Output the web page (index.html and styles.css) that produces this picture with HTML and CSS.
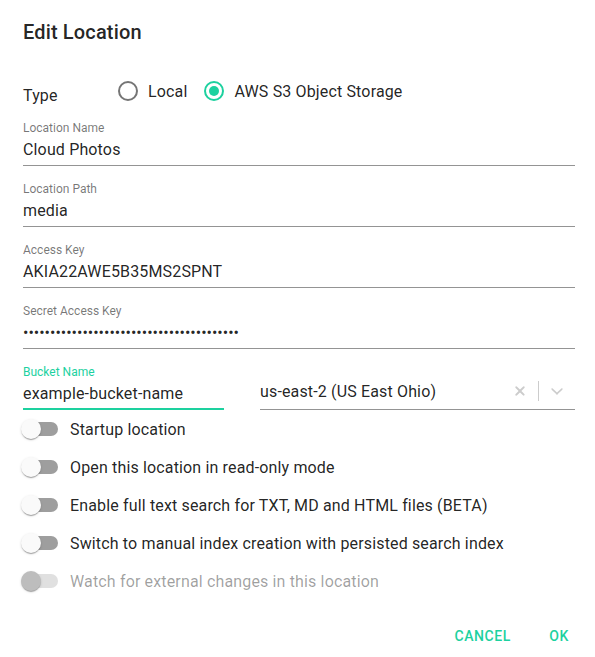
FILE: index.html
```html
<!DOCTYPE html>
<html lang="en">
<head>
<meta charset="utf-8">
<title>Edit Location</title>
<link rel="stylesheet" href="styles.css">
</head>
<body>
<div class="dialog">
  <h2 class="title">Edit Location</h2>
  <div class="content">
    <div class="type-row">
      <span class="type-label">Type</span>
      <label class="radio">
        <span class="radio-icon"><svg width="24" height="24" viewBox="0 0 24 24"><circle cx="12" cy="12" r="9" fill="none" stroke="#757575" stroke-width="2"/></svg></span>
        <span class="radio-text">Local</span>
      </label>
      <label class="radio">
        <span class="radio-icon"><svg width="24" height="24" viewBox="0 0 24 24"><circle cx="12" cy="12" r="9" fill="none" stroke="#1dd19f" stroke-width="2"/><circle cx="12" cy="12" r="5" fill="#1dd19f"/></svg></span>
        <span class="radio-text">AWS S3 Object Storage</span>
      </label>
    </div>

    <div class="field">
      <div class="field-label">Location Name</div>
      <div class="field-input">Cloud Photos</div>
    </div>
    <div class="field">
      <div class="field-label">Location Path</div>
      <div class="field-input">media</div>
    </div>
    <div class="field">
      <div class="field-label">Access Key</div>
      <div class="field-input">AKIA22AWE5B35MS2SPNT</div>
    </div>
    <div class="field">
      <div class="field-label">Secret Access Key</div>
      <div class="field-input"><span class="dots">••••••••••••••••••••••••••••••••••••••••</span></div>
    </div>

    <div class="bucket-row">
      <div class="field bucket focused">
        <div class="field-label">Bucket Name</div>
        <div class="field-input">example-bucket-name</div>
      </div>
      <div class="select">
        <span class="select-value">us-east-2 (US East Ohio)</span>
        <span class="select-icons">
          <svg class="clear" width="20" height="20" viewBox="0 0 20 20"><path d="M14.35 14.35a1 1 0 0 1-1.41 0L10 11.41l-2.94 2.94a1 1 0 1 1-1.41-1.41L8.59 10 5.65 7.06a1 1 0 1 1 1.41-1.41L10 8.59l2.94-2.94a1 1 0 1 1 1.41 1.41L11.41 10l2.94 2.94a1 1 0 0 1 0 1.41z" fill="#cccccc"/></svg>
          <span class="sep"></span>
          <svg class="chev" width="20" height="20" viewBox="0 0 20 20"><path d="M4.52 7.4c.32-.33.77-.36 1.16 0L10 11.54l4.32-4.14c.39-.36.84-.33 1.16 0 .32.33.3.88 0 1.19-.3.31-4.86 4.79-4.86 4.79a.83.83 0 0 1-1.24 0S4.82 8.9 4.52 8.59c-.3-.31-.32-.86 0-1.19z" fill="#cccccc"/></svg>
        </span>
      </div>
    </div>

    <div class="switches">
      <label class="switch-row">
        <span class="switch"><span class="track"></span><span class="thumb"></span></span>
        <span class="switch-text">Startup location</span>
      </label>
      <label class="switch-row">
        <span class="switch"><span class="track"></span><span class="thumb"></span></span>
        <span class="switch-text">Open this location in read-only mode</span>
      </label>
      <label class="switch-row">
        <span class="switch"><span class="track"></span><span class="thumb"></span></span>
        <span class="switch-text">Enable full text search for TXT, MD and HTML files (BETA)</span>
      </label>
      <label class="switch-row">
        <span class="switch"><span class="track"></span><span class="thumb"></span></span>
        <span class="switch-text">Switch to manual index creation with persisted search index</span>
      </label>
      <label class="switch-row disabled">
        <span class="switch"><span class="track"></span><span class="thumb"></span></span>
        <span class="switch-text">Watch for external changes in this location</span>
      </label>
    </div>
  </div>
  <div class="actions">
    <button class="btn">Cancel</button>
    <button class="btn">Ok</button>
  </div>
</div>
</body>
</html>
```

FILE: styles.css
```css
* { box-sizing: border-box; }
html, body { margin: 0; padding: 0; background: #fff; }
body {
  font-family: Roboto, "Liberation Sans", Arial, sans-serif;
  color: rgba(0,0,0,0.87);
}
.dialog {
  width: 595px;
  height: 657px;
  display: flex;
  flex-direction: column;
}
.title {
  margin: 0;
  padding: 16px 23px;
  font-size: 20px;
  font-weight: 500;
  line-height: 32px;
  letter-spacing: 0.0075em;
}
.content {
  padding: 0 20px 0 23px;
  flex: 1;
}
.type-row {
  display: flex;
  align-items: center;
  height: 30px;
  margin-top: 12px;
  margin-bottom: -1px;
}
.type-label {
  width: 93px;
  font-size: 16px;
  letter-spacing: 0.15px;
  padding-top: 8px;
}
.radio {
  display: flex;
  align-items: center;
  margin-right: 15px;
}
.radio-icon {
  width: 24px;
  height: 24px;
  display: flex;
  margin-right: 8px;
}
.radio-text { font-size: 16px; letter-spacing: 0.15px; }

.field {
  display: flex;
  flex-direction: column;
  margin-top: 16px;
}
.field-label {
  font-size: 12px;
  line-height: 14px;
  color: rgba(0,0,0,0.54);
}
.field-input {
  font-size: 16px;
  letter-spacing: 0.15px;
  line-height: 20px;
  margin-top: 5px;
  padding-bottom: 5px;
  border-bottom: 1px solid rgba(0,0,0,0.42);
  white-space: nowrap;
}
.dots {
  letter-spacing: 0;
  font-size: 16px;
}
.bucket-row {
  display: flex;
  align-items: flex-end;
  gap: 36px;
}
.bucket { width: 201px; }
.focused .field-label { color: #1dd19f; }
.focused .field-input {
  border-bottom: 2px solid #1dd19f;
  padding-bottom: 4px;
}
.select {
  flex: 1;
  display: flex;
  align-items: center;
  justify-content: space-between;
  border-bottom: 1px solid rgba(0,0,0,0.42);
  height: 36px;
  padding-bottom: 1px;
}
.select-value { font-size: 16px; letter-spacing: 0.15px; }
.select-icons {
  display: flex;
  align-items: center;
}
.clear { margin-right: 8px; }
.sep {
  width: 1px;
  height: 20px;
  background: #cccccc;
  margin-right: 8px;
}
.chev { margin-right: 8px; }

.switches {
  display: flex;
  flex-direction: column;
  margin-left: -11px;
}
.switch-row {
  display: flex;
  align-items: center;
  height: 38px;
}
.switch {
  position: relative;
  width: 58px;
  height: 38px;
  flex: none;
}
.track {
  position: absolute;
  left: 12px;
  top: 12px;
  width: 34px;
  height: 14px;
  border-radius: 7px;
  background: #9e9e9e;
}
.thumb {
  position: absolute;
  left: 9px;
  top: 9px;
  width: 20px;
  height: 20px;
  border-radius: 50%;
  background: #fafafa;
  box-shadow: 0 2px 1px -1px rgba(0,0,0,0.2), 0 1px 1px 0 rgba(0,0,0,0.14), 0 1px 3px 0 rgba(0,0,0,0.12);
}
.switch-text { font-size: 16px; letter-spacing: 0.15px; }
.disabled .track { background: #e0e0e0; }
.disabled .thumb { background: #bdbdbd; }
.disabled .switch-text { color: rgba(0,0,0,0.38); }

.actions {
  display: flex;
  justify-content: flex-end;
  gap: 8px;
  padding: 5px 4px 3px 8px;
}
.btn {
  font-family: inherit;
  font-size: 14px;
  font-weight: 500;
  text-transform: uppercase;
  letter-spacing: 0.6px;
  color: #1dd19f;
  background: none;
  border: none;
  min-width: 64px;
  height: 36px;
  padding: 6px 8px;
  cursor: pointer;
}
```
